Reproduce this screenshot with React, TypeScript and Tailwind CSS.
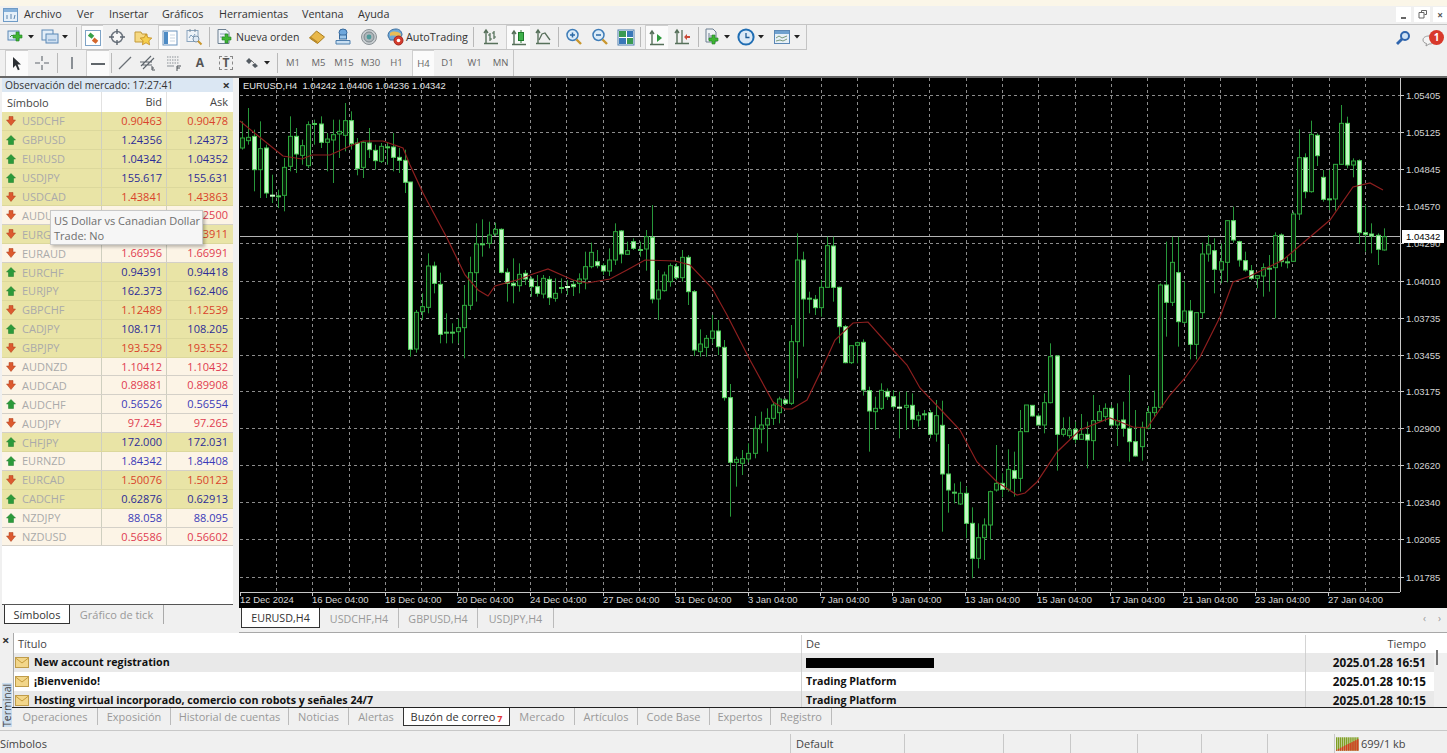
import React from "react";

type C = number[];
const segs: { x0: number; y0: number; c: C[] }[] = [
  { x0: 242, y0: 78, c: [
    [130,180,210,215,0],[90,178,188,200,0],[155,175,275,340,1],[130,212,275,360,0],[200,210,345,360,1],[290,350,354,375,1],[335,352,354,390,0],[240,268,352,400,0],[115,175,265,280,0],[150,175,228,285,1],[185,203,232,260,0],[130,140,263,270,0],[125,135,140,200,0],[115,138,193,210,1],[165,183,193,280,0],[125,170,186,315,0],[125,160,168,240,0],[75,128,172,220,0],[100,128,197,215,1],[180,195,272,292,1],[190,193,268,300,0],[150,195,215,240,1],[200,217,248,275,1],[195,205,250,255,0],[195,205,207,260,0],[165,207,238,280,1],[210,238,247,285,1],[215,247,313,345,1],
  ]},
  { x0: 410, y0: 200, c: [
    [-54,-54,448,470,1],[330,337,447,458,0],[280,320,335,360,0],[160,198,322,340,0],[185,198,250,280,1],[218,253,403,430,1],[340,395,400,430,0],[370,395,400,430,0],[355,383,395,430,0],[255,316,383,475,0],[170,218,316,330,0],[70,132,218,305,0],[58,130,134,170,0],[65,105,130,145,0],[68,88,102,108,0],[85,88,217,220,1],[205,217,250,305,1],[175,250,257,310,1],[190,223,257,275,0],[210,220,237,255,1],[230,237,260,290,1],[225,260,280,290,1],[225,235,282,295,0],[228,238,293,315,1],[235,280,295,305,0],[235,261,264,280,0],[240,258,263,285,1],[240,253,260,288,1],[220,237,250,280,0],[155,200,237,268,0],[128,157,200,205,0],[150,185,197,205,1],[190,197,213,225,1],[145,180,213,228,0],[70,95,180,195,0],[90,93,162,190,1],[125,152,163,165,0],[115,125,145,150,1],[125,147,149,170,0],[90,110,147,212,0],[15,112,297,310,1],[210,270,297,360,0],[215,225,272,275,0],[190,197,245,260,0],[190,200,233,240,1],[150,172,233,245,0],[165,172,275,315,1],[270,275,450,468,1],[388,432,455,470,0],[405,415,442,470,0],[345,393,415,430,0],[360,393,440,465,1],
  ]},
  { x0: 724.3, y0: 230, c: [
    [330,352,503,512,1],[462,503,697,860,1],[680,688,697,770,0],[660,686,700,735,0],[640,670,687,697,0],[558,595,670,685,0],[545,585,597,640,0],[535,565,585,665,0],[515,525,565,585,0],[500,507,548,580,0],[505,510,520,525,1],[285,335,520,525,0],[10,90,335,445,0],[65,90,207,350,1],[185,203,208,250,0],[195,208,233,255,1],[150,172,233,260,0],[20,47,172,172,0],[20,48,172,215,1],[170,172,290,340,1],[285,290,398,400,1],[345,347,398,402,0],[335,338,346,400,0],[328,337,480,497,1],[470,482,543,665,1],[500,535,545,600,0],[460,481,535,540,0],[475,484,500,510,1],[480,500,530,540,1],[485,530,535,625,1],[485,526,532,600,0],[490,526,568,595,1],[545,557,570,590,0],[540,550,553,570,0],[540,548,613,625,1],[510,557,612,635,0],[512,586,732,905,1],[642,732,780,848,1],[760,785,787,820,0],[755,790,822,825,0],[770,790,880,925,1],[832,880,985,1045,1],[880,923,985,1015,0],[865,885,923,990,0],[782,785,885,930,0],[645,760,780,785,0],[730,760,778,802,1],[658,718,778,785,0],[665,722,745,800,1],[540,605,745,785,0],[525,525,605,605,0],[525,526,558,560,1],[550,558,585,585,1],[490,518,585,610,0],[340,380,518,520,0],[375,378,613,722,1],[562,598,613,620,0],[560,600,617,625,0],[575,598,628,640,1],[552,613,628,630,0],[575,613,630,715,1],[495,572,632,690,0],[525,545,572,575,0],[520,535,560,575,0],[525,535,585,590,1],[520,572,585,648,0],[515,570,595,620,1],[435,595,635,695,1],[540,635,678,680,1],
  ]},
  { x0: 1142, y0: 200, c: [
    [665,682,740,782,0],[618,637,685,688,0],[572,622,638,650,0],[250,255,622,625,0],[125,255,307,410,1],[110,187,307,318,0],[110,218,365,440,1],[245,333,367,372,0],[300,333,433,478,1],[338,338,433,478,0],[128,162,338,355,0],[105,135,162,185,0],[115,152,208,280,1],[130,185,210,250,0],[60,62,187,247,0],[20,62,120,128,1],[122,125,180,200,1],[155,182,210,215,1],[195,212,235,240,1],[225,227,235,265,0],[190,203,228,290,0],[165,203,206,275,0],[97,107,203,355,0],[100,105,185,200,1],[170,184,189,205,0],[35,42,184,186,0],
  ]},
  { x0: 1299, y0: 90, c: [
    [118,203,372,390,0],[190,203,305,325,1],[92,133,305,308,0],[130,136,197,228,1],[240,262,328,335,1],[240,325,327,360,0],[222,223,327,362,0],[45,100,223,225,0],[80,100,225,235,1],[205,213,225,262,0],[208,212,428,462,1],[345,428,434,485,1],[400,432,438,490,1],[430,436,478,525,1],[415,440,480,482,0],
  ]},
];

const ma = "240,121 257,135 283,156 302,159 312,155 330,155 350,146 363,141 383,141 403,148 410,165 423,193 447,238 465,275 478,290 488,296 495,286 517,280 533,274 548,269 573,280 587,283 610,279 627,270 645,260 675,261 690,265 712,288 727,315 750,360 773,402 785,409 792,409 807,400 820,373 835,340 853,323 868,322 893,350 907,365 920,388 943,412 960,430 977,462 997,482 1017,495 1025,493 1037,482 1057,452 1080,430 1110,418 1133,427 1147,428 1170,395 1185,378 1200,357 1220,317 1233,282 1250,276 1283,260 1310,237 1330,220 1353,187 1370,183 1383,190";
const prices: [string, number][] = [["1.05405",95],["1.05125",132],["1.04845",169],["1.04570",206],["1.04290",243],["1.04010",281],["1.03735",318],["1.03455",355],["1.03175",391],["1.02900",428],["1.02620",465],["1.02340",502],["1.02065",539],["1.01785",577]];
const times: [string, number][] = [["12 Dec 2024",240],["16 Dec 04:00",312],["18 Dec 04:00",385],["20 Dec 04:00",457],["24 Dec 04:00",530],["27 Dec 04:00",603],["31 Dec 04:00",675],["3 Jan 04:00",748],["7 Jan 04:00",820],["9 Jan 04:00",892],["13 Jan 04:00",965],["15 Jan 04:00",1037],["17 Jan 04:00",1110],["21 Jan 04:00",1183],["23 Jan 04:00",1255],["27 Jan 04:00",1328]];

function Chart() {
  const vgrid = Array.from({ length: 31 }, (_, i) => Math.round(276 + i * 36.3));
  const font = "'Liberation Sans', sans-serif";
  return (
    <svg width={1208} height={531} viewBox="239 77 1208 531" className="block">
      <rect x={239} y={77} width={1208} height={531} fill="#000" />
      {vgrid.map((x) => <line key={x} x1={x + 0.5} x2={x + 0.5} y1={78} y2={592} stroke="#8c8c8c" strokeDasharray="3 3" />)}
      {prices.map(([p, y]) => <line key={p} x1={240} x2={1400} y1={y + 0.5} y2={y + 0.5} stroke="#8c8c8c" strokeDasharray="3 3" />)}
      <line x1={240} x2={1400} y1={236.5} y2={236.5} stroke="#b4b4b4" />
      {segs.map((s, si) => s.c.map((c, i) => {
        const x = Math.round(s.x0 + i * 6.04);
        const [h, t, b, l] = c.map((v) => s.y0 + v / 3);
        const filled = c[4] === 1;
        return (
          <g key={si + "-" + i}>
            <line x1={x + 0.5} x2={x + 0.5} y1={h} y2={l} stroke="#27973a" />
            {b - t < 2 ? <line x1={x - 2} x2={x + 3} y1={t + 1} y2={t + 1} stroke={filled ? "#c8ffc8" : "#4cc757"} strokeWidth={2} /> :
              <rect x={x - 1.5} y={t} width={4} height={b - t} fill={filled ? "#c6f8c6" : "#071f0a"} stroke={filled ? "#52cf5c" : "#2ea83c"} />}
          </g>
        );
      }))}
      <polyline points={ma} fill="none" stroke="#8e1f1f" strokeWidth={1.2} />
      <line x1={1400.5} x2={1400.5} y1={78} y2={592} stroke="#c8c8c8" />
      <line x1={240} x2={1400} y1={592.5} y2={592.5} stroke="#c8c8c8" />
      {prices.map(([p, y]) => (
        <g key={p}>
          <line x1={1400} x2={1404} y1={y + 0.5} y2={y + 0.5} stroke="#c8c8c8" />
          <text x={1406} y={y + 3.5} fill="#d4d4d4" fontSize={9.5} fontFamily={font}>{p}</text>
        </g>
      ))}
      <rect x={1402} y={230} width={42} height={13} fill="#fff" />
      <text x={1406} y={240} fill="#000" fontSize={9.5} fontFamily={font}>1.04342</text>
      {times.map(([t, x]) => (
        <g key={t}>
          <line x1={x + 0.5} x2={x + 0.5} y1={592} y2={596} stroke="#c8c8c8" />
          <text x={x} y={603} fill="#d8d8d8" fontSize={9.5} fontFamily={font}>{t}</text>
        </g>
      ))}
      <text x={243} y={89} fill="#e6e6e6" fontSize={9.4} fontFamily={font} xmlSpace="preserve">EURUSD,H4  1.04242 1.04406 1.04236 1.04342</text>
    </svg>
  );
}

const S = ({ children, w = 18 }: { children: React.ReactNode; w?: number }) => (
  <svg width={w} height={18} viewBox="0 0 18 18" className="block shrink-0">{children}</svg>
);
const Plus = ({ x = 9, y = 10 }: { x?: number; y?: number }) => (
  <path d={`M${x + 3} ${y}h3v3h3v3h-3v3h-3v-3h-3v-3h3z`} fill="#3fb534" stroke="#1f7f22" strokeWidth={0.6} />
);
const Caret = () => <svg width={7} height={4} viewBox="0 0 7 4" className="block shrink-0"><path d="M0 0h6l-3 3.5z" fill="#222" /></svg>;
const Axes = ({ c = "#56705a" }: { c?: string }) => <path d="M4 2v13M2 5l2-3 2 3M2 15.5h14" stroke={c} strokeWidth={1.4} fill="none" />;

const I = {
  newChart: <S><rect x="1" y="3" width="11" height="9" fill="#dcebf7" stroke="#5b87b5" /><path d="M3 9l2-2 2 2 3-3" stroke="#3c8f3c" fill="none" /><Plus x={6} y={4} /></S>,
  profile: <S><rect x="1" y="2" width="11" height="10" fill="#e3eef8" stroke="#5b87b5" /><rect x="5" y="6" width="12" height="9" fill="#cfe0f1" stroke="#5b87b5" /><path d="M7 12h8" stroke="#6a93bd" /></S>,
  market: <S><rect x="1.5" y="1.5" width="15" height="15" fill="#fff" stroke="#7ea3c6" /><rect x="5" y="4.5" width="5" height="4" fill="#38a048" transform="rotate(40 7 6)" /><rect x="9" y="9.5" width="5" height="4" fill="#d4662b" transform="rotate(40 11 11)" /></S>,
  cross: <S><circle cx="9" cy="9" r="5.5" fill="#f7f7f7" stroke="#6f7780" strokeWidth="1.5" /><path d="M9 1v5M9 12v5M1 9h5M12 9h5" stroke="#5c6670" strokeWidth="1.4" /></S>,
  star: <S><path d="M1 4h6l1 2h5v8H1z" fill="#f6d982" stroke="#c39a3b" /><path d="M12 6l1.8 3.6 4 .5-2.9 2.7.7 4-3.6-2-3.6 2 .7-4-2.9-2.7 4-.5z" fill="#f6cf4d" stroke="#c08a1e" strokeWidth=".8" /></S>,
  nav: <S><rect x="2" y="2" width="14" height="14" fill="#fff" stroke="#6a93bd" /><rect x="3" y="3" width="4" height="12" fill="#4e8bc4" /><path d="M9 6h5M9 9h5M9 12h5" stroke="#c9d6e2" /></S>,
  tester: <S><rect x="2" y="2.5" width="11" height="11" fill="#eef3f8" stroke="#8aa4bd" /><path d="M5 1v3M10 1v3" stroke="#7a8a99" /><path d="M4 10l2-3 2 2 2-3" stroke="#7e9dba" fill="none" /><circle cx="11" cy="11" r="3" fill="#dfeaf5" stroke="#7a92a8" /><path d="M13 13l3.5 3.5" stroke="#c9962d" strokeWidth="2" /></S>,
  order: <S><path d="M2 1.5h8l3 3v11H2z" fill="#eff4f9" stroke="#6d7f91" /><path d="M4 6h7M4 9h4" stroke="#8ba1b8" /><Plus x={6} y={6} /></S>,
  yellow: <S><path d="M1.5 10L8.5 3l8 6-7 6.5z" fill="#e9b84a" stroke="#a87c1e" /><path d="M1.5 10l8 5.5v-2L2.5 8.5z" fill="#b98a2b" /></S>,
  blue: <S><ellipse cx="9" cy="4.5" rx="4" ry="3.5" fill="#6ea7dc" stroke="#35689c" /><rect x="5.5" y="7" width="7" height="4" fill="#9cc6ea" stroke="#35689c" /><path d="M2 12.5h14v3.5H2z" fill="#c9dff2" stroke="#4d7ead" /></S>,
  signal: <S><circle cx="9" cy="9" r="7.5" fill="#c9ced1" stroke="#8b9296" /><circle cx="9" cy="9" r="5" fill="#aeb6ba" stroke="#7d878c" /><circle cx="9" cy="9" r="2.4" fill="#4d9a9a" /></S>,
  auto: <S><path d="M2 8c0-5 4-7 8-7s6 3 6 6l-3 5H4z" fill="#6fa9d8" stroke="#3d6f9f" /><path d="M4 5c3-2 7-2 11 1l-1 3c-3-1-7-2-10-1z" fill="#e8bd58" /><circle cx="12.5" cy="12.5" r="4.5" fill="#d43b2d" stroke="#9f261c" /><circle cx="12.5" cy="12.5" r="1.8" fill="#fff" /></S>,
  bars: <S><Axes /><path d="M8 5v8M8 7h-2M8 11h2M12 3v8M12 5h-2M12 9h2" stroke="#4d6b52" strokeWidth="1.2" fill="none" /></S>,
  candle: <S><Axes /><path d="M11 1v13" stroke="#2c7a33" /><rect x="8.5" y="3.5" width="5" height="8" fill="#3eb04a" stroke="#1e7a2b" /></S>,
  line: <S><Axes /><path d="M5 12l3-6 3-1 5 7" stroke="#59705c" strokeWidth="1.3" fill="none" /></S>,
  zoomIn: <S><circle cx="7.5" cy="7" r="5.5" fill="#dcecf8" stroke="#3f7db8" strokeWidth="1.5" /><path d="M5 7h5M7.5 4.5v5" stroke="#2c6aa6" strokeWidth="1.5" /><path d="M11.5 11.5l4.5 4.5" stroke="#c9962d" strokeWidth="2.4" /></S>,
  zoomOut: <S><circle cx="7.5" cy="7" r="5.5" fill="#dcecf8" stroke="#3f7db8" strokeWidth="1.5" /><path d="M5 7h5" stroke="#2c6aa6" strokeWidth="1.5" /><path d="M11.5 11.5l4.5 4.5" stroke="#c9962d" strokeWidth="2.4" /></S>,
  tile: <S><rect x="1" y="2" width="16" height="15" fill="#fff" stroke="#4d7ead" /><rect x="2" y="3" width="7" height="6" fill="#3a9a52" /><rect x="10" y="3" width="6" height="6" fill="#3a78b8" /><rect x="2" y="10" width="7" height="6" fill="#3a78b8" /><rect x="10" y="10" width="6" height="6" fill="#3a9a52" /></S>,
  shift: <S><Axes /><path d="M9 5l5 4-5 4z" fill="#2d9a3c" /></S>,
  autoscroll: <S><Axes /><path d="M9 2v13" stroke="#56705a" strokeWidth="1.3" /><path d="M11 9l3-3v2h3v2h-3v2z" fill="#c94a35" /></S>,
  indic: <S><path d="M3 1h7l3 3v10H3z" fill="#eff2f5" stroke="#6d7f91" /><path d="M6 5v7M8 7v4" stroke="#6d7f91" /><Plus x={6} y={7} /></S>,
  clock: <S><circle cx="9" cy="9" r="7.6" fill="#dbe9f6" stroke="#1f6db3" strokeWidth="2" /><path d="M9 5v4.5h3.5" stroke="#1f5c96" strokeWidth="1.3" fill="none" /></S>,
  template: <S><rect x="1.5" y="2.5" width="15" height="13" fill="#e7f0f8" stroke="#5b87b5" /><rect x="2" y="3" width="14" height="3" fill="#6fa1cf" /><path d="M3 10l3-2 3 2 5-2M3 13l4-1 3 1 4-2" stroke="#7a9a7a" fill="none" /></S>,
  cursor: <S><path d="M5 2l8 7.5H9.5l2.2 5-1.8.8-2.2-5L5 13z" fill="#2b2f33" /></S>,
  crosshair: <S><path d="M9 2v5M9 11v5M2 9h5M11 9h5" stroke="#5e656c" strokeWidth="1.1" /></S>,
  vline: <S><path d="M9 3v12" stroke="#70777e" strokeWidth="1.6" /></S>,
  hline: <S><path d="M2 9h14" stroke="#4f555b" strokeWidth="1.8" /></S>,
  diag: <S><path d="M3 15L15 3" stroke="#6a7076" strokeWidth="1.3" /></S>,
  fibo: <S><path d="M2 12L12 2M4 15L15 4M1 8h12M3 11h10" stroke="#5e656c" strokeWidth="1.1" /><path d="M13 12v4h3M13 14h2" stroke="#4a5056" fill="none" /></S>,
  lines: <S><path d="M2 3h12M2 6h12M2 9h12" stroke="#8a9096" strokeDasharray="1.5 1" /><path d="M2 12h7" stroke="#8a9096" /><path d="M12 12v5M12 12h4M12 14h3" stroke="#4a5056" fill="none" /></S>,
  arrows: <S><path d="M3 7l3-3 3 3-3 3zM9 11l3-2 3 3-3 2z" fill="#555c63" /><path d="M8 6l3 3" stroke="#777" /></S>,
};

const Btn = ({ w = 26, on, children }: { w?: number; on?: boolean; children: React.ReactNode }) => (
  <div className={`flex h-full shrink-0 items-center justify-center gap-[3px] ${on ? "bg-[#fbfbfb] border-t border-l border-[#cfcfcf]" : ""}`} style={{ width: w }}>{children}</div>
);
const Sep = () => <div className="mx-[2px] h-[20px] w-px shrink-0 bg-[#b9b9b9]" />;

const Arrow = ({ up }: { up: boolean }) => (
  <svg width={12} height={12} viewBox="0 0 12 12" className="block shrink-0">
    {up ? <path d="M6 1.500l4.500 4.500H8.500V10.500H3.500V6H1.500z" fill="#2b9a3a" stroke="#197a28" strokeWidth=".5" />
      : <path d="M4 1.500h4V5h2.500L6 10.500 1.500 5H4z" fill="#dc5a2f" stroke="#ad3f1d" strokeWidth=".5" />}
  </svg>
);

const rows: [string, string, string, boolean, boolean][] = [
  ["USDCHF","0.90463","0.90478",false,true],["GBPUSD","1.24356","1.24373",true,true],["EURUSD","1.04342","1.04352",true,true],["USDJPY","155.617","155.631",true,true],["USDCAD","1.43841","1.43863",false,true],["AUDUSD","0.62480","0.62500",false,false],["EURGBP","0.83881","0.83911",false,true],["EURAUD","1.66956","1.66991",false,false],["EURCHF","0.94391","0.94418",true,true],["EURJPY","162.373","162.406",true,true],["GBPCHF","1.12489","1.12539",false,true],["CADJPY","108.171","108.205",true,true],["GBPJPY","193.529","193.552",false,true],["AUDNZD","1.10412","1.10432",false,false],["AUDCAD","0.89881","0.89908",false,false],["AUDCHF","0.56526","0.56554",true,false],["AUDJPY","97.245","97.265",false,false],["CHFJPY","172.000","172.031",true,true],["EURNZD","1.84342","1.84408",true,false],["EURCAD","1.50076","1.50123",false,true],["CADCHF","0.62876","0.62913",true,true],["NZDJPY","88.058","88.095",true,false],["NZDUSD","0.56586","0.56602",false,false],
];

function Market() {
  return (
    <div className="relative flex h-full w-[239px] shrink-0 flex-col pl-[2px] pr-[6px]">
      <div className="flex h-[14px] shrink-0 items-center justify-between bg-[#dbe7f3] pl-[3px] pr-[3px] text-[#333]">
        <span className="text-[10.25px]">Observación del mercado: 17:27:41</span>
        <span className="text-[13px] font-bold leading-none">×</span>
      </div>
      <div className="flex min-h-0 flex-1 flex-col bg-white">
        <div className="flex h-[20px] shrink-0 items-center text-[#444]">
          <div className="w-[99px] pl-[5px]">Símbolo</div>
          <div className="h-full w-[65px] border-l border-[#e2e2e2] pr-[4px] text-right leading-[20px]">Bid</div>
          <div className="h-full flex-1 border-l border-[#e2e2e2] pr-[5px] text-right leading-[20px]">Ask</div>
        </div>
        {rows.map(([s, b, a, up, y]) => {
          const col = up ? (y ? "text-[#2c2c96]" : "text-[#3a3ab8]") : (y ? "text-[#d9432b]" : "text-[#e03c50]");
          return (
            <div key={s} className={`flex h-[18.9px] shrink-0 items-center border-b ${y ? "bg-[#e9e4a6] border-[#dcd89c]" : "bg-[#fcf4e6] border-[#d4d0c8]"}`}>
              <div className="flex h-full w-[99px] items-center gap-[5px] pl-[3px] text-[#aaaaaa]"><Arrow up={up} /><span>{s}</span></div>
              <div className={`h-full w-[65px] border-l border-[#cfcfc0] pr-[4px] text-right leading-[18px] ${col}`}>{b}</div>
              <div className={`h-full flex-1 border-l border-[#cfcfc0] pr-[5px] text-right leading-[18px] ${col}`}>{a}</div>
            </div>
          );
        })}
      </div>
      <div className="flex h-[29px] shrink-0 items-start border-t border-[#555] bg-[#f0f0f0]">
        <div className="ml-[2px] flex h-[19px] w-[66px] items-center justify-center border-b border-l border-r border-[#333] bg-white text-[#333]">Símbolos</div>
        <div className="flex h-[19px] w-[94px] items-center justify-center border-r border-[#aaa] text-[#999]">Gráfico de tick</div>
      </div>
      <div className="absolute left-[50px] top-[132px] flex h-[35px] w-[153px] flex-col justify-center border border-[#c8c8c8] bg-[#f6f6f6] pl-[3px] pt-[1px] leading-[15px] text-[#6e6e6e] shadow-[2px_2px_3px_rgba(0,0,0,0.25)]">
        <span>US Dollar vs Canadian Dollar</span>
        <span>Trade: No</span>
      </div>
    </div>
  );
}

const msgs: [string, string, string, boolean][] = [
  ["New account registration", "", "2025.01.28 16:51", true],
  ["¡Bienvenido!", "Trading Platform", "2025.01.28 10:15", false],
  ["Hosting virtual incorporado, comercio con robots y señales 24/7", "Trading Platform", "2025.01.28 10:15", true],
];

const Env = () => (
  <svg width={14} height={11} viewBox="0 0 14 11" className="block shrink-0">
    <rect x=".5" y=".5" width="13" height="10" fill="#f2d68a" stroke="#bf9c4a" />
    <path d="M.5 1L7 6l6.500-5" stroke="#c49b3d" fill="none" />
  </svg>
);

const termTabs: [string, number][] = [["Operaciones",85],["Exposición",73],["Historial de cuentas",118],["Noticias",60]];
const termTabs2: [string, number][] = [["Mercado",65],["Artículos",63],["Code Base",72],["Expertos",61],["Registro",61]];

export default function App() {
  const font = "'Open Sans', 'Noto Sans', sans-serif";
  return (
    <div className="flex h-[753px] w-[1447px] flex-col overflow-hidden bg-[#f0f0f0] text-[11px] leading-none" style={{ fontFamily: font }}>
      <div className="h-[6px] shrink-0 bg-[#fbf6e8]" />
      {/* menu */}
      <div className="flex h-[19px] shrink-0 items-center border-b border-[#c4c4c4] pb-[1px] pl-[3px] text-[10.8px] text-[#333]">
        <svg width={16} height={16} viewBox="0 0 16 16" className="mr-[5px] block shrink-0"><rect x=".5" y="1.5" width="14" height="13" fill="#e6f0f9" stroke="#6f9bc6" /><rect x="1" y="2" width="13" height="3" fill="#86b1da" /><path d="M4 12V8M8 12V7M11 12l1-4" stroke="#5c84ad" /></svg>
        <span className="w-[53px]">Archivo</span>
        <span className="w-[32px]">Ver</span>
        <span className="w-[53px]">Insertar</span>
        <span className="w-[57px]">Gráficos</span>
        <span className="w-[83px]">Herramientas</span>
        <span className="w-[56px]">Ventana</span>
        <span>Ayuda</span>
        <div className="ml-auto flex h-[15px] items-center gap-[3px] text-[10px] text-[#555]">
          <div className="flex h-full w-[15px] items-end justify-center bg-white pb-[3px]"><div className="h-[2px] w-[5px] bg-[#666]" /></div>
          <div className="flex h-full w-[16px] items-center justify-center bg-white"><svg width={9} height={9} viewBox="0 0 9 9"><path d="M3.500 2.500V.5h5v4H6.500M1 2.500h5v5.500H1z" fill="none" stroke="#666" /></svg></div>
          <div className="flex h-full w-[14px] items-center justify-center bg-white font-bold">×</div>
        </div>
      </div>
      {/* toolbar 1 */}
      <div className="flex h-[25px] shrink-0">
        <div className="flex h-full items-center border-b border-r border-[#c4c4c4] pl-[6px]">
          <Btn w={30}>{I.newChart}<Caret /></Btn>
          <Btn w={38}>{I.profile}<Caret /></Btn>
          <Sep />
          <div className="w-[2px] shrink-0" />
          <Btn w={22} on>{I.market}</Btn>
          <Btn w={28}>{I.cross}</Btn>
          <Btn w={24}>{I.star}</Btn>
          <div className="w-[3px] shrink-0" />
          <Btn w={22} on>{I.nav}</Btn>
          <Btn w={27}>{I.tester}</Btn>
          <Sep />
          <div className="flex h-full w-[93px] shrink-0 items-center gap-[2px] whitespace-nowrap pl-[4px] text-[#333]">{I.order}<span className="text-[10.5px]">Nueva orden</span></div>
          <Btn w={24}>{I.yellow}</Btn>
          <Btn w={28}>{I.blue}</Btn>
          <Btn w={24}>{I.signal}</Btn>
          <div className="flex h-full w-[90px] shrink-0 items-center gap-[2px] whitespace-nowrap pl-[5px] text-[#333]">{I.auto}<span className="text-[10.8px]">AutoTrading</span></div>
          <Sep />
          <Btn w={30}>{I.bars}</Btn>
          <Btn w={24} on>{I.candle}</Btn>
          <Btn w={26}>{I.line}</Btn>
          <Sep />
          <Btn w={26}>{I.zoomIn}</Btn>
          <Btn w={26}>{I.zoomOut}</Btn>
          <Btn w={25}>{I.tile}</Btn>
          <Sep />
          <div className="w-[2px] shrink-0" />
          <Btn w={23} on>{I.shift}</Btn>
          <Btn w={28}>{I.autoscroll}</Btn>
          <Sep />
          <Btn w={32}>{I.indic}<Caret /></Btn>
          <Btn w={35}>{I.clock}<Caret /></Btn>
          <Btn w={38}>{I.template}<Caret /></Btn>
        </div>
        <div className="ml-auto flex h-full items-center gap-[11px] pr-[3px]">
          <svg width={16} height={16} viewBox="0 0 16 16" className="block"><circle cx="10" cy="6" r="4" fill="#cfe2f5" stroke="#2f65ad" strokeWidth="2" /><path d="M7 9l-5 5" stroke="#2f65ad" strokeWidth="2.800" /></svg>
          <div className="relative h-[20px] w-[22px]">
            <svg width={14} height={12} viewBox="0 0 14 12" className="absolute left-[0px] top-[7px] block"><path d="M1 5c0-2.500 2.500-4 6-4s6 1.500 6 4-2.500 4-6 4l-3 2 .5-2.500C2.500 8 1 7 1 5z" fill="#f4f4f4" stroke="#999" /></svg>
            <div className="absolute left-[7px] top-[2px] flex h-[15px] w-[15px] items-center justify-center rounded-full bg-[#d8392b] text-[10px] font-bold text-white">1</div>
          </div>
        </div>
      </div>
      {/* toolbar 2 */}
      <div className="flex h-[26px] shrink-0">
        <div className="flex h-full items-center border-r border-[#c4c4c4] pl-[5px] text-[9.5px] text-[#666]">
          <Btn w={23} on>{I.cursor}</Btn>
          <Btn w={27}>{I.crosshair}</Btn>
          <Sep />
          <Btn w={23}>{I.vline}</Btn>
          <div className="w-[3px] shrink-0" />
          <Btn w={23} on>{I.hline}</Btn>
          <Sep />
          <Btn w={21}>{I.diag}</Btn>
          <Btn w={26}>{I.fibo}</Btn>
          <Btn w={26}>{I.lines}</Btn>
          <Btn w={26}><span className="text-[12px] font-bold text-[#555]">A</span></Btn>
          <Btn w={26}><span className="flex h-[14px] w-[14px] items-center justify-center border border-dashed border-[#888] text-[12px] font-bold text-[#555]">T</span></Btn>
          <Btn w={36}>{I.arrows}<Caret /></Btn>
          <Sep />
          <Btn w={26}>M1</Btn>
          <Btn w={25}>M5</Btn>
          <Btn w={26}>M15</Btn>
          <Btn w={27}>M30</Btn>
          <Btn w={25}>H1</Btn>
          <div className="w-[3px] shrink-0" />
          <Btn w={22} on>H4</Btn>
          <Btn w={27}>D1</Btn>
          <Btn w={27}>W1</Btn>
          <Btn w={25}>MN</Btn>
        </div>
      </div>
      {/* main */}
      <div className="flex h-[557px] shrink-0 border-t-2 border-[#666]">
        <Market />
        <div className="flex min-w-0 flex-1 flex-col">
          <div className="h-[530px] shrink-0 overflow-hidden"><div className="-mt-px"><Chart /></div></div>
          <div className="flex h-[25px] shrink-0 items-start border-b border-[#a8a8a8] pl-[2px] text-[10.7px]">
            <div className="flex h-[20px] w-[79px] items-center justify-center border-b border-l border-r border-[#333] bg-white pt-[2px] text-[#333]">EURUSD,H4</div>
            <div className="flex h-[20px] w-[79px] items-center justify-center border-r border-[#bbb] pt-[2px] text-[#999]">USDCHF,H4</div>
            <div className="flex h-[20px] w-[79px] items-center justify-center border-r border-[#bbb] pt-[2px] text-[#999]">GBPUSD,H4</div>
            <div className="flex h-[20px] w-[76px] items-center justify-center border-r border-[#bbb] pt-[2px] text-[#999]">USDJPY,H4</div>
            <div className="ml-auto flex h-[20px] items-center gap-[12px] pr-[6px] text-[10px] text-[#999]"><span>‹</span><span>›</span></div>
          </div>
        </div>
      </div>
      {/* terminal */}
      <div className="flex h-[74px] shrink-0">
        <div className="flex w-[13px] shrink-0 flex-col pl-[2px] pt-[1px]"><span className="text-[13px] font-bold text-[#333]">×</span></div>
        <div className="relative flex-1 overflow-hidden border-l border-[#aaa]">
          <div className="flex h-[20px] items-center bg-white pt-[2px] text-[#444]">
            <div className="h-full w-[787px] pl-[4px] leading-[18px]">Título</div>
            <div className="h-full w-[504px] border-l border-[#d4d4d4] pl-[4px] leading-[18px]">De</div>
            <div className="h-full flex-1 border-l border-[#d4d4d4] pr-[8px] text-right leading-[18px]">Tiempo</div>
            <div className="h-full w-[13px] shrink-0" />
          </div>
          {msgs.map(([t, d, time, g], i) => (
            <div key={t} className={`flex h-[19px] items-center font-bold text-[#111] ${g ? "bg-[#e9e9e9]" : "bg-white"}`}>
              <div className="flex h-full w-[787px] items-center gap-[5px] pl-[1px] text-[10.7px]"><Env /><span>{t}</span></div>
              <div className="flex h-full w-[504px] items-center border-l border-[#d0d0d0] pl-[4px] text-[10.7px]">{i === 0 ? <div className="h-[10px] w-[128px] bg-black" /> : d}</div>
              <div className="flex h-full flex-1 items-center justify-end border-l border-[#d0d0d0] pr-[8px] text-[11.7px]">{time}</div>
              <div className="h-full w-[13px] shrink-0 bg-[#f0f0f0]" />
            </div>
          ))}
          <div className="absolute right-[9px] top-[17px] h-[15px] w-[2px] bg-[#777]" />
        </div>
      </div>
      {/* terminal tabs */}
      <div className="relative flex h-[19px] shrink-0 items-start border-t border-[#222] pl-[13px] text-[#999]">
        {termTabs.map(([t, w]) => <div key={t} className="flex h-[17px] items-center justify-center border-r border-[#bbb]" style={{ width: w }}>{t}</div>)}
        <div className="flex h-[17px] w-[54px] items-center justify-center">Alertas</div>
        <div className="flex h-[18px] w-[107px] items-center justify-center border-b border-l border-r border-[#333] bg-white pb-[1px] text-[#333]">Buzón de correo<span className="ml-[2px] mt-[5px] text-[9px] font-bold text-[#d33]">7</span></div>
        {termTabs2.map(([t, w]) => <div key={t} className="flex h-[17px] items-center justify-center border-r border-[#bbb]" style={{ width: w }}>{t}</div>)}
        <div className="absolute bottom-[-1px] left-[2px] flex h-[44px] w-[10px] rotate-180 items-center justify-center bg-[#cbddee] text-[10.5px] text-[#444] [writing-mode:vertical-rl]">Terminal</div>
      </div>
      <div className="h-[5px] shrink-0 border-b border-[#c8c8c8]" />
      {/* status */}
      <div className="flex flex-1 items-center pt-[3px] text-[#444]">
        <div className="w-[790px] shrink-0">Símbolos</div>
        <div className="flex h-full w-[114px] items-center border-l border-[#c8c8c8] pl-[5px]">Default</div>
        <div className="h-full w-[99px] border-l border-[#c8c8c8]" />
        <div className="h-full w-[67px] border-l border-[#c8c8c8]" />
        <div className="h-full w-[67px] border-l border-[#c8c8c8]" />
        <div className="h-full w-[64px] border-l border-[#c8c8c8]" />
        <div className="h-full w-[66px] border-l border-[#c8c8c8]" />
        <div className="h-full w-[67px] border-l border-[#c8c8c8]" />
        <div className="flex h-full items-center gap-[2px] border-l border-[#c8c8c8] pl-[1px]">
          <svg width={23} height={14} viewBox="0 0 24 14" className="block">{Array.from({ length: 12 }, (_, i) => (
            <g key={i}><rect x={i * 2} y={0} width={1.5} height={14} fill="#7f9f23" /><rect x={i * 2} y={13 - i} width={1.5} height={i + 1} fill="#d63a1e" /></g>
          ))}</svg>
          <span>699/1 kb</span>
        </div>
      </div>
    </div>
  );
}
